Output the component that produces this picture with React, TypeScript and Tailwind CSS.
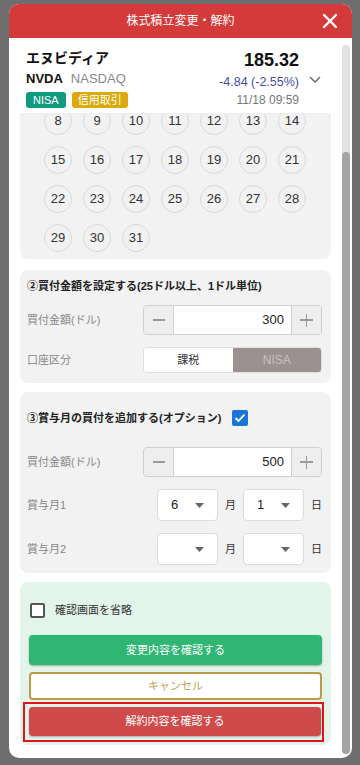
import React from "react";

const font = "font-['Liberation_Sans','Noto_Sans_CJK_JP',sans-serif]";

const days = [
  [8, 9, 10, 11, 12, 13, 14],
  [15, 16, 17, 18, 19, 20, 21],
  [22, 23, 24, 25, 26, 27, 28],
  [29, 30, 31],
];

const Stepper = ({ value }: { value: string }) => (
  <div className="flex h-[30px] w-[179px] overflow-hidden rounded-[4px] border border-[#cfcfcf]">
    <div className="flex w-[29px] items-center justify-center bg-[#eeeeee]">
      <div className="h-[1.5px] w-[12px] bg-[#9a9a9a]" />
    </div>
    <div className="flex flex-1 items-center justify-end border-x border-[#cfcfcf] bg-white pr-[7px] text-[13px] text-[#222]">
      {value}
    </div>
    <div className="relative flex w-[29px] items-center justify-center bg-[#eeeeee]">
      <div className="h-[1.5px] w-[13px] bg-[#9a9a9a]" />
      <div className="absolute h-[13px] w-[1.5px] bg-[#9a9a9a]" />
    </div>
  </div>
);

const Select = ({ value }: { value?: string }) => (
  <div className="flex h-[32px] w-[61px] items-center justify-between rounded-[4px] border border-[#dcdcdc] bg-white pl-[13px] pr-[13px] text-[13px] text-[#222]">
    <span>{value ?? ""}</span>
    <svg width="9" height="5" viewBox="0 0 9 5">
      <path d="M0 0h9L4.5 5z" fill="#666" />
    </svg>
  </div>
);

const BonusRow = ({ label, month, day }: { label: string; month?: string; day?: string }) => (
  <div className="flex items-center">
    <div className="flex-1 text-[11px] text-[#888]">{label}</div>
    <Select value={month} />
    <div className="w-[25px] text-center text-[11px] text-[#333]">月</div>
    <Select value={day} />
    <div className="w-[18px] text-right text-[11px] text-[#333]">日</div>
  </div>
);

export default function App() {
  return (
    <div className={`h-[765px] w-[360px] overflow-hidden bg-[#6e6e6e] pl-[9px] pt-[4px] ${font}`}>
      <div className="flex h-[754px] w-[343px] flex-col overflow-hidden rounded-[10px] bg-white">
        {/* header */}
        <div className="relative flex h-[34px] shrink-0 items-center justify-center bg-[#d43a3a] text-[12px] text-white">
          株式積立変更・解約
          <svg className="absolute right-[14px] top-[9px]" width="16" height="16" viewBox="0 0 16 16">
            <path d="M2 2L14 14M14 2L2 14" stroke="#fff" strokeWidth="2.4" strokeLinecap="round" />
          </svg>
        </div>

        <div className="flex min-h-0 flex-1 pl-[11px]">
          <div className="flex w-[311px] flex-col overflow-hidden">
            {/* stock header */}
            <div className="flex h-[76px] shrink-0 border-b border-[#eeeeee] bg-white">
              <div className="flex-1 pl-[6px] pt-[10px]">
                <div className="text-[14px] font-bold leading-[20px] text-[#111]">エヌビディア</div>
                <div className="mt-[2px] flex items-center gap-[8px] text-[13px] leading-[18px]">
                  <span className="font-bold text-[#111]">NVDA</span>
                  <span className="text-[#888]">NASDAQ</span>
                </div>
                <div className="mt-[4px] flex gap-[6px] text-[11px] leading-[16px] text-white">
                  <span className="rounded-[3px] bg-[#12997f] px-[7px]">NISA</span>
                  <span className="rounded-[3px] bg-[#dba90c] px-[6px]">信用取引</span>
                </div>
              </div>
              <div className="flex flex-col items-end pt-[11px]">
                <div className="text-[18px] font-bold leading-[22px] text-[#111]">185.32</div>
                <div className="mt-[3px] text-[12.5px] leading-[16px] text-[#3f4fa6]">-4.84 (-2.55%)</div>
                <div className="mt-[2px] text-[12px] leading-[16px] text-[#777]">11/18 09:59</div>
              </div>
              <div className="flex w-[32px] items-start justify-center pt-[38px]">
                <svg width="12" height="7" viewBox="0 0 12 7">
                  <path d="M1 1l5 5 5-5" stroke="#666" strokeWidth="1.4" fill="none" />
                </svg>
              </div>
            </div>

            {/* calendar */}
            <div className="h-[145px] shrink-0 overflow-hidden rounded-b-[8px] bg-[#f2f2f2]">
              <div className="-mt-[7px] grid grid-cols-[repeat(7,28px)] gap-[11px] pl-[24px]">
                {days.flat().map((d) => (
                  <div
                    key={d}
                    className="flex h-[28px] w-[28px] items-center justify-center rounded-full border border-[#d9d9d9] text-[13px] text-[#333]"
                  >
                    {d}
                  </div>
                ))}
              </div>
            </div>

            {/* amount */}
            <div className="mt-[11px] shrink-0 rounded-[8px] bg-[#f2f2f2] pb-[10px] pl-[7px] pr-[9px] pt-[8px]">
              <div className="text-[11px] font-bold leading-[16px] text-[#222]">
                ②買付金額を設定する(25ドル以上、1ドル単位)
              </div>
              <div className="mt-[11px] flex items-center">
                <div className="flex-1 text-[11px] text-[#888]">買付金額(ドル)</div>
                <Stepper value="300" />
              </div>
              <div className="mt-[12px] flex items-center">
                <div className="flex-1 text-[11px] text-[#888]">口座区分</div>
                <div className="flex h-[26px] w-[179px] overflow-hidden rounded-[4px] border border-[#dddddd]">
                  <div className="flex flex-1 items-center justify-center bg-white text-[11px] text-[#333]">課税</div>
                  <div className="flex flex-1 items-center justify-center bg-[#9c9191] text-[12px] text-[#c9c0c0]">NISA</div>
                </div>
              </div>
            </div>

            {/* bonus */}
            <div className="mt-[9px] shrink-0 rounded-[8px] bg-[#f2f2f2] pb-[8px] pl-[7px] pr-[9px] pt-[17px]">
              <div className="flex h-[18px] items-center gap-[11px]">
                <span className="text-[11px] font-bold text-[#222]">③賞与月の買付を追加する(オプション)</span>
                <span className="flex h-[16px] w-[16px] items-center justify-center rounded-[2px] bg-[#1b74d8]">
                  <svg width="12" height="10" viewBox="0 0 12 10">
                    <path d="M1.5 5l3 3 6-6.5" stroke="#fff" strokeWidth="1.8" fill="none" />
                  </svg>
                </span>
              </div>
              <div className="mt-[20px] flex items-center">
                <div className="flex-1 text-[11px] text-[#888]">買付金額(ドル)</div>
                <Stepper value="500" />
              </div>
              <div className="mt-[12px]">
                <BonusRow label="賞与月1" month="6" day="1" />
              </div>
              <div className="mt-[12px]">
                <BonusRow label="賞与月2" />
              </div>
            </div>

            {/* actions */}
            <div className="mt-[9px] shrink-0 rounded-[8px] bg-[#e3f4ea] pb-[3px] pt-[20px]">
              <div className="flex h-[16px] items-center gap-[10px] pl-[10px]">
                <span className="h-[15px] w-[15px] rounded-[2px] border-2 border-[#555] bg-white" />
                <span className="text-[11px] text-[#333]">確認画面を省略</span>
              </div>
              <div className="px-[9px]">
                <button className="mt-[17px] flex h-[30px] w-full items-center justify-center rounded-[4px] bg-[#2fb673] text-[11px] text-white shadow-[0_1px_2px_rgba(0,0,0,0.3)]">
                  変更内容を確認する
                </button>
                <button className="mt-[7px] flex h-[28px] w-full items-center justify-center rounded-[4px] border-2 border-[#bd9b45] bg-white text-[11px] text-[#c2a257]">
                  キャンセル
                </button>
              </div>
              <div className="ml-[3px] mt-[2px] w-[301px] border-2 border-[#e2141a] pb-[4px] pl-[4px] pr-[1px] pt-[3px]">
                <button className="flex h-[29px] w-full items-center justify-center rounded-[4px] bg-[#cf4b4b] text-[11px] text-white shadow-[0_1px_2px_rgba(0,0,0,0.3)]">
                  解約内容を確認する
                </button>
              </div>
            </div>
          </div>

          {/* scrollbar */}
          <div className="ml-[11px] mt-[7px] mb-[4px] flex w-[8px] flex-col rounded-full bg-[#e2e2e2]">
            <div className="mt-[107px] flex-1 rounded-full bg-[#a3a3a3]" />
          </div>
        </div>
      </div>
    </div>
  );
}
